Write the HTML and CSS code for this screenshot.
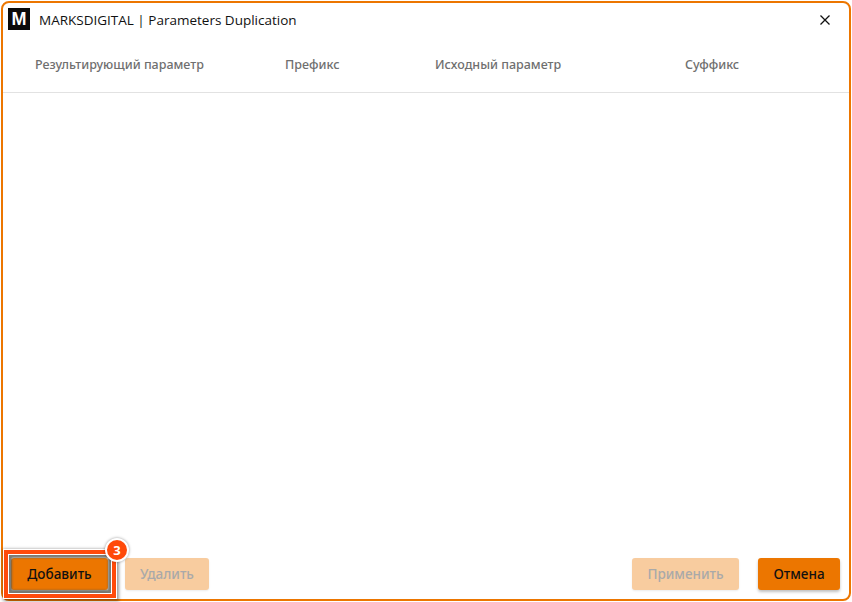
FILE: index.html
```html
<!DOCTYPE html>
<html lang="en">
<head>
    <meta charset="UTF-8">
    <meta name="viewport" content="width=device-width, initial-scale=1.0">
    <title>MARKSDIGITAL | Parameters Duplication</title>
    <link rel="stylesheet" href="styles.css">
</head>
<body>
    <div class="window">
        <div class="titlebar">
            <div class="logo">M</div>
            <div class="title">MARKSDIGITAL | Parameters Duplication</div>
            <svg class="close" width="10" height="10" viewBox="0 0 10 10">
                <path d="M0.5 0.5L9.5 9.5M9.5 0.5L0.5 9.5" stroke="#111" stroke-width="1.3" fill="none"/>
            </svg>
        </div>
        <div class="columns">
            <div class="col col-result">Результирующий параметр</div>
            <div class="col col-prefix">Префикс</div>
            <div class="col col-source">Исходный параметр</div>
            <div class="col">Суффикс</div>
        </div>
        <div class="rows"></div>
        <div class="footer">
            <div class="add-wrap">
                <button class="btn">Добавить</button>
                <div class="highlight"></div>
                <div class="badge">3</div>
            </div>
            <button class="btn btn-disabled btn-delete">Удалить</button>
            <div class="spacer"></div>
            <button class="btn btn-disabled btn-apply">Применить</button>
            <button class="btn btn-cancel">Отмена</button>
        </div>
    </div>
</body>
</html>
```

FILE: styles.css
```css
* {
    margin: 0;
    padding: 0;
    box-sizing: border-box;
}
html, body {
    height: 100%;
}
body {
    font-family: 'Open Sans', 'Noto Sans', sans-serif;
    background: #fff;
    padding: 1px;
    overflow: hidden;
}
.window {
    height: 100%;
    display: flex;
    flex-direction: column;
    background: #fff;
    border: 2px solid #ec7600;
    border-radius: 8px;
}
.titlebar {
    display: flex;
    align-items: center;
    height: 34px;
    padding: 0 19px 3px 5px;
    flex: none;
}
.logo {
    width: 22px;
    height: 22px;
    background: #0b0b0b;
    color: #fff;
    font: bold 18px/22px 'Liberation Sans', sans-serif;
    text-align: center;
}
.title {
    margin: 3px 0 0 9px;
    font-size: 13.5px;
    color: #111;
    flex: 1;
}
.close {
    margin-top: 3px;
}
.columns {
    display: flex;
    align-items: center;
    height: 56px;
    padding-left: 32px;
    border-bottom: 1px solid #e2e2e2;
    flex: none;
}
.col {
    font-family: 'Noto Sans', sans-serif;
    font-size: 12.5px;
    font-weight: 500;
    color: #6f6f6f;
}
.col-result { width: 250px; }
.col-prefix { width: 150px; }
.col-source { width: 250px; }
.rows {
    flex: 1;
}
.footer {
    display: flex;
    align-items: flex-start;
    height: 41px;
    padding: 0 9px 0 8px;
    flex: none;
}
.add-wrap {
    position: relative;
    display: flex;
}
.btn {
    width: 97px;
    height: 32px;
    border: none;
    border-radius: 3px;
    background: #ec7600;
    color: #111;
    font-family: 'Noto Sans', sans-serif;
    font-size: 13.5px;
    font-weight: 500;
    box-shadow: 0 2px 3px rgba(0, 0, 0, 0.25);
}
.btn-disabled {
    background: #f8cc9f;
    color: #a9a9a9;
    box-shadow: 0 1px 2px rgba(0, 0, 0, 0.08);
}
.btn-delete {
    width: 84px;
    margin-left: 17px;
}
.btn-apply {
    width: 107px;
}
.btn-cancel {
    width: 82px;
    margin-left: 19px;
}
.spacer {
    flex: 1;
}
.highlight {
    position: absolute;
    left: -7px;
    top: -8px;
    right: -8px;
    bottom: -8px;
    border: 4px solid #ff4a0a;
    box-shadow: 0 0 0 1px #fff, 1px 1px 3px 2px rgba(0, 0, 0, 0.4), inset 0 0 0 1px #fff, inset 0 0 2px 4px rgba(90, 90, 80, 0.8);
}
.badge {
    position: absolute;
    left: 94px;
    top: -20px;
    width: 24px;
    height: 24px;
    border-radius: 50%;
    background: #ff4a0a;
    border: 2px solid #fff;
    box-shadow: 0 0 3px rgba(0, 0, 0, 0.4);
    color: #fff;
    font-size: 13px;
    font-weight: 700;
    line-height: 20px;
    text-align: center;
}
```
